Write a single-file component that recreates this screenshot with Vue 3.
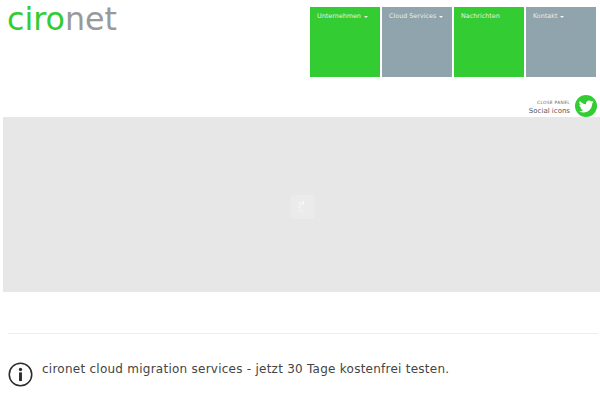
<script setup>
const tiles = [
  { label: 'Unternehmen', green: true, caret: true },
  { label: 'Cloud Services', green: false, caret: true },
  { label: 'Nachrichten', green: true, caret: false },
  { label: 'Kontakt', green: false, caret: true },
]
</script>

<template>
  <div class="page">
    <header class="top">
      <div class="logo"><span class="g">ciro</span><span class="n">net</span></div>
      <nav class="nav">
        <a v-for="t in tiles" :key="t.label" class="tile" :class="t.green ? 'green' : 'grey'">
          <span>{{ t.label }}</span><i v-if="t.caret" class="caret"></i>
        </a>
      </nav>
    </header>
    <div class="social">
      <div class="labels">
        <div class="close">CLOSE PANEL</div>
        <div class="si">Social icons</div>
      </div>
      <div class="bird">
        <svg width="15" height="15" viewBox="0 0 24 24"><path fill="#fff" d="M23.6 4.6c-.9.4-1.8.7-2.8.8 1-.6 1.8-1.5 2.1-2.7-.9.6-2 1-3.1 1.2C18.900 2.900 17.600 2.300 16.200 2.300c-2.700 0-4.900 2.200-4.900 4.900 0 .4 0 .8.100 1.100C7.300 8.100 3.700 6.100 1.300 3.100.9 3.800.6 4.700.6 5.600c0 1.700.9 3.200 2.200 4.100-.8 0-1.600-.2-2.200-.6v.1c0 2.400 1.700 4.400 3.900 4.800-.4.100-.8.200-1.300.2-.3 0-.6 0-.9-.1.6 2 2.400 3.400 4.600 3.400-1.700 1.300-3.800 2.100-6.100 2.100-.4 0-.8 0-1.200-.1 2.200 1.400 4.800 2.200 7.500 2.200 9 0 14-7.500 14-14v-.6c1-.7 1.800-1.600 2.500-2.500z"/></svg>
      </div>
    </div>
    <div class="slider">
      <div class="loader">
        <svg width="14" height="14" viewBox="0 0 14 14"><g stroke="#fff" stroke-width="1.200" stroke-linecap="round"><path d="M7 1.500v2.500"/><path d="M3.500 3l1.500 2" opacity=".9"/><path d="M2 7h2.500" opacity=".7"/><path d="M3.500 11l1.500-2" opacity=".5"/><path d="M7 12.500v-2.500" opacity=".3"/></g></svg>
      </div>
    </div>
    <hr class="rule" />
    <div class="info">
      <svg class="icon" width="25" height="25" viewBox="0 0 26 26">
        <circle cx="13" cy="13" r="11.700" fill="none" stroke="#2b2b2b" stroke-width="1.600"/>
        <circle cx="13" cy="7.800" r="1.700" fill="#2b2b2b"/>
        <rect x="11.500" y="10.800" width="3" height="9" fill="#2b2b2b"/>
      </svg>
      <p class="msg">cironet cloud migration services - jetzt 30 Tage kostenfrei testen.</p>
    </div>
  </div>
</template>

<style>
html, body { margin: 0; background: #fff; }
</style>

<style scoped>
.page {
  width: 600px;
  height: 400px;
  overflow: hidden;
  font-family: "DejaVu Sans", sans-serif;
  background: #fff;
  display: flex;
  flex-direction: column;
}
.top {
  display: flex;
  justify-content: space-between;
  height: 77px;
  flex: none;
}
.logo {
  font-size: 31.700px;
  line-height: 38px;
  margin-left: 7px;
}
.g { color: #33cc33; }
.n { color: #999999; }
.nav {
  display: flex;
  gap: 2px;
  padding: 7px 4px 0 0;
}
.tile {
  width: 70px;
  height: 70px;
  box-sizing: border-box;
  padding: 4px 7px;
  font-size: 6.400px;
  line-height: 10px;
  color: #e6efe6;
  white-space: nowrap;
}
.green { background: #33cc33; }
.grey { background: #90a4ae; }
.caret {
  display: inline-block;
  margin-left: 3px;
  vertical-align: 0;
  border-left: 2px solid transparent;
  border-right: 2px solid transparent;
  border-top: 2px solid #f2f5f2;
}
.social {
  display: flex;
  justify-content: flex-end;
  align-items: center;
  gap: 5px;
  height: 40px;
  flex: none;
  padding-right: 3px;
  box-sizing: border-box;
}
.labels { text-align: right; margin-top: 22px; }
.close {
  font-size: 4.400px;
  line-height: 7px;
  letter-spacing: .3px;
  color: #666;
}
.si {
  font-size: 7px;
  line-height: 11px;
  color: #555;
}
.bird {
  width: 22px;
  height: 22px;
  border-radius: 50%;
  background: #33cc33;
  display: flex;
  align-items: center;
  justify-content: center;
  margin-top: 18px;
}
.slider {
  margin-left: 3px;
  height: 175px;
  flex: none;
  background: #e7e7e7;
  display: flex;
  align-items: center;
  justify-content: center;
}
.loader {
  width: 24px;
  height: 24px;
  margin: 5px 0 0 2px;
  border-radius: 3px;
  background: #ebebeb;
  display: flex;
  align-items: center;
  justify-content: center;
}
.rule {
  margin: 41px 2px 0 8px;
  border: 0;
  height: 1px;
  background: #eeeeee;
  flex: none;
}
.info {
  display: flex;
  gap: 9px;
  margin: 28px 0 0 8px;
  align-items: flex-start;
}
.icon { flex: none; }
.msg {
  margin: 0;
  font-size: 12px;
  line-height: 14px;
  letter-spacing: .25px;
  color: #444;
}
</style>
